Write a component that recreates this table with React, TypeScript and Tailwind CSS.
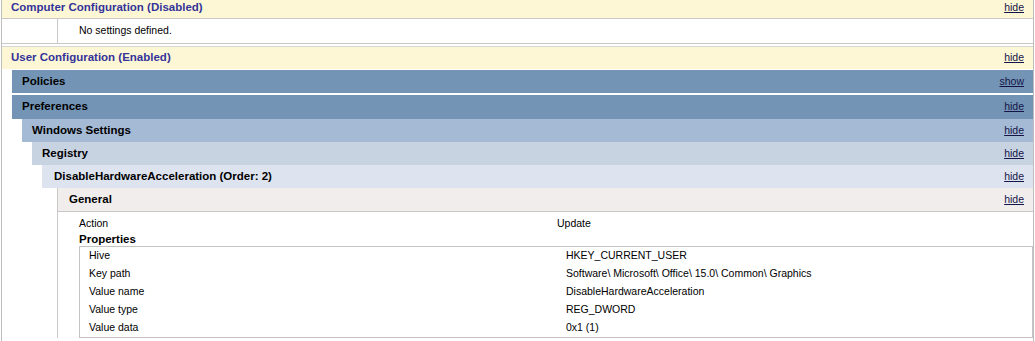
import React from "react";

const FONT = "font-['Liberation_Sans',Arial,sans-serif]";

function Link({ label = "hide" }: { label?: string }) {
  return <span className="underline font-normal text-[10.5px] text-[#14144a]">{label}</span>;
}

function Band({
  title,
  bg,
  pad,
  h,
  link = "hide",
  extra = "",
}: {
  title: string;
  bg: string;
  pad: string;
  h: string;
  link?: string;
  extra?: string;
}) {
  return (
    <div className={`flex items-center justify-between pr-[9px] ${bg} ${pad} ${h} ${extra}`}>
      <span className="font-bold text-[11.5px] text-black">{title}</span>
      <Link label={link} />
    </div>
  );
}

export default function App() {
  const props: [string, string][] = [
    ["Hive", "HKEY_CURRENT_USER"],
    ["Key path", "Software\\ Microsoft\\ Office\\ 15.0\\ Common\\ Graphics"],
    ["Value name", "DisableHardwareAcceleration"],
    ["Value type", "REG_DWORD"],
    ["Value data", "0x1 (1)"],
  ];
  return (
    <div className={`w-[1035px] h-[341px] overflow-hidden bg-white text-black text-[10.5px] ${FONT}`}>
      <div className="ml-[1px] mr-[1px] h-[343px] border-l border-r border-[#bdbdbd]">
        {/* Computer Configuration */}
        <div className="-mt-[2px] h-[21px] flex items-center justify-between pl-[9px] pr-[9px] bg-[#FEF7D6] border-b border-[#c8c8c8]">
          <span className="font-bold text-[11.5px] text-[#333399]">Computer Configuration (Disabled)</span>
          <Link />
        </div>
        <div className="h-[25px] border-b border-[#c8c8c8] pl-[55px] flex">
          <div className="flex-1 border-l border-[#c8c8c8] pl-[21px] flex items-center">No settings defined.</div>
        </div>

        {/* User Configuration */}
        <div className="mt-[2px] h-[23px] flex items-center justify-between pl-[9px] pr-[9px] bg-[#FEF7D6] border-t border-[#d6d6d6]">
          <span className="font-bold text-[11.5px] text-[#333399]">User Configuration (Enabled)</span>
          <Link />
        </div>

        <div className="ml-[10px] mt-[1px]">
          <Band title="Policies" bg="bg-[#7394B4]" pad="pl-[10px]" h="h-[23px]" link="show" />
          <Band title="Preferences" bg="bg-[#7394B4]" pad="pl-[10px]" h="h-[24px]" extra="mt-[2px]" />
          <div className="ml-[10px]">
            <Band title="Windows Settings" bg="bg-[#A4BAD5]" pad="pl-[10px]" h="h-[23px]" />
            <div className="ml-[10px]">
              <Band title="Registry" bg="bg-[#C8D3E2]" pad="pl-[10px]" h="h-[23px]" />
              <div className="ml-[10px]">
                <Band
                  title="DisableHardwareAcceleration (Order: 2)"
                  bg="bg-[#DEE4EF]"
                  pad="pl-[12px]"
                  h="h-[23px]"
                />
                <div className="ml-[15px] border-l border-[#c8c8c8]">
                  <Band
                    title="General"
                    bg="bg-[#F1EDED]"
                    pad="pl-[11px]"
                    h="h-[24px]"
                    extra="border-b border-[#c8c8c8]"
                  />
                  <div className="pl-[21px] pt-[3px]">
                    <div className="grid grid-cols-[478px_1fr] h-[18px] items-center">
                      <span>Action</span>
                      <span>Update</span>
                    </div>
                    <div className="h-[13px] flex items-center font-bold text-[11.5px]">Properties</div>
                    <div className="border border-[#c4c4c4]">
                      {props.map(([k, v]) => (
                        <div key={k} className="grid grid-cols-[486px_1fr] h-[18px] items-center">
                          <span className="pl-[9px]">{k}</span>
                          <span>{v}</span>
                        </div>
                      ))}
                    </div>
                  </div>
                </div>
              </div>
            </div>
          </div>
        </div>
      </div>
    </div>
  );
}
